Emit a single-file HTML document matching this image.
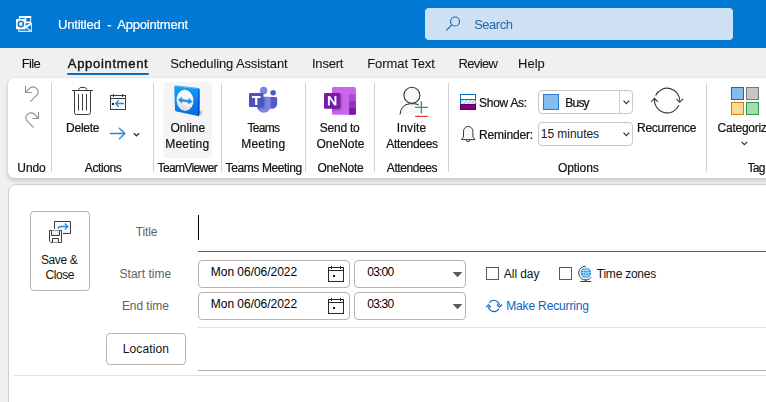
<!DOCTYPE html>
<html lang="en">
<head>
<meta charset="utf-8">
<title>Untitled - Appointment</title>
<style>
*{box-sizing:border-box;margin:0;padding:0}
html,body{width:766px;height:402px;overflow:hidden;background:#f0f0f0}
body{position:relative;font-family:"Liberation Sans",sans-serif;font-size:12px;color:#242424;line-height:16px}
.abs,.t{position:absolute;white-space:nowrap}
#titlebar{position:absolute;left:0;top:0;width:766px;height:48px;background:#0078d4}
#search{position:absolute;left:425px;top:8px;width:308px;height:32px;background:#cde1f3;border-radius:4px}
#ribbon{position:absolute;left:8px;top:78px;width:780px;height:100px;background:#fff;border-radius:6px;box-shadow:0 0 1px rgba(0,0,0,.20),0 2px 4px rgba(0,0,0,.13),0 4px 6px rgba(0,0,0,.05)}
.sep{position:absolute;top:83px;width:1px;height:89px;background:#d2d2d2}
#gs .t{-webkit-text-stroke:0.22px currentColor}
#content{position:absolute;left:8px;top:184px;width:780px;height:240px;background:#fff;border:1px solid #cdcdcd;border-radius:8px 0 0 0}
.box{position:absolute;border:1px solid #b6b3b0;border-radius:4px;background:#fff}
.chk{position:absolute;width:13px;height:13px;border:1px solid #5a5a5a;background:#fff}
#ico{position:absolute;left:0;top:0;width:766px;height:402px;overflow:hidden}
</style>
</head>
<body>
<div id="titlebar"></div>
<div id="search"></div>
<div class="abs" style="left:67px;top:73px;width:82px;height:2px;background:#0f6cbd;border-radius:1px"></div>

<div id="ribbon"></div>
<div class="sep" style="left:51px"></div>
<div class="sep" style="left:153px"></div>
<div class="sep" style="left:221px"></div>
<div class="sep" style="left:305px"></div>
<div class="sep" style="left:374px"></div>
<div class="sep" style="left:448px"></div>
<div class="sep" style="left:706px"></div>
<div class="abs" style="left:163px;top:82px;width:49px;height:76px;background:#f5f5f5;border-radius:4px"></div>

<div class="box" style="left:538px;top:90px;width:95px;height:24px;border-color:#c8c8c8"></div>
<div class="abs" style="left:619px;top:91px;width:1px;height:22px;background:#d0d0d0"></div>
<div class="abs" style="left:543px;top:94px;width:16px;height:16px;background:#83bcee;border:1px solid #2a7bd0"></div>
<div class="box" style="left:538px;top:122px;width:95px;height:24px;border-color:#c8c8c8"></div>

<div id="content"></div>
<div class="box" style="left:30px;top:211px;width:60px;height:80px"></div>
<div class="abs" style="left:198px;top:215px;width:1px;height:25px;background:#000"></div>
<div class="abs" style="left:198px;top:251px;width:570px;height:1px;background:#0078d4"></div>
<div class="box" style="left:198px;top:260px;width:152px;height:28px"></div>
<div class="box" style="left:354px;top:260px;width:112px;height:28px"></div>
<div class="box" style="left:198px;top:292px;width:152px;height:28px"></div>
<div class="box" style="left:354px;top:292px;width:112px;height:28px"></div>
<div class="chk" style="left:486px;top:267px"></div>
<div class="chk" style="left:559px;top:267px"></div>
<div class="abs" style="left:198px;top:327px;width:570px;height:1px;background:#e1e1e1"></div>
<div class="box" style="left:106px;top:333px;width:80px;height:32px"></div>
<div class="abs" style="left:198px;top:370px;width:570px;height:1px;background:#b0aeab"></div>
<div class="abs" style="left:14px;top:375px;width:760px;height:1px;background:#e1e1e1"></div>

<div class="t" id="b15" style="left:540.85px;top:126px;font-size:12px;letter-spacing:-0.052px;color:#1a1a1a;">15 minutes</div>
<div class="t" id="fSave" style="left:40.92px;top:252px;font-size:12px;letter-spacing:-0.376px;color:#141414;">Save &amp;</div>
<div class="t" id="fClose" style="left:45.61px;top:267px;font-size:12px;letter-spacing:-0.452px;color:#141414;">Close</div>
<div class="t" id="fTitle" style="left:135.80px;top:224px;font-size:12px;letter-spacing:-0.152px;color:#616161;">Title</div>
<div class="t" id="fStart" style="left:119.48px;top:266px;font-size:12px;letter-spacing:0.044px;color:#616161;">Start time</div>
<div class="t" id="fEnd" style="left:121.88px;top:298px;font-size:12px;letter-spacing:-0.049px;color:#616161;">End time</div>
<div class="t" id="fD1" style="left:210.80px;top:264px;font-size:12px;letter-spacing:-0.029px;color:#000;">Mon 06/06/2022</div>
<div class="t" id="fD2" style="left:210.80px;top:296px;font-size:12px;letter-spacing:-0.029px;color:#000;">Mon 06/06/2022</div>
<div class="t" id="fT1" style="left:367.29px;top:264px;font-size:12px;letter-spacing:-0.784px;color:#000;">03:00</div>
<div class="t" id="fT2" style="left:367.29px;top:296px;font-size:12px;letter-spacing:-0.784px;color:#000;">03:30</div>
<div class="t" id="fAll" style="left:503.86px;top:266px;font-size:12px;letter-spacing:-0.071px;color:#141414;">All day</div>
<div class="t" id="fTz" style="left:596.80px;top:266px;font-size:12px;letter-spacing:-0.239px;color:#141414;">Time zones</div>
<div class="t" id="fMk" style="left:506.14px;top:298px;font-size:12px;letter-spacing:-0.138px;color:#0f5fbc;">Make Recurring</div>
<div class="t" id="fLoc" style="left:122.80px;top:341px;font-size:12px;letter-spacing:0.114px;color:#141414;">Location</div>

<svg id="ico" width="766" height="402" viewBox="0 0 766 402">
<!-- outlook logo -->
<g>
 <rect x="18.900" y="16" width="12.300" height="8" fill="#fff"/>
 <rect x="20.200" y="18" width="4.600" height="1" fill="#0078d4"/>
 <rect x="26.300" y="18" width="4" height="3.500" fill="#0078d4"/>
 <rect x="18.300" y="23" width="13.500" height="8.800" fill="#fff"/>
 <path d="M25.5 23.300 H30.200 L25.5 25.800z" fill="#0078d4"/>
 <path d="M31 25 V30.200 L26.900 27.400z" fill="#0078d4"/>
 <path d="M19.300 29.300 H25.200 L25.800 28 L30 30.700 H19.300z" fill="#0078d4"/>
 <rect x="16" y="19.100" width="9.100" height="10" fill="#fff"/>
 <ellipse cx="20.800" cy="24" rx="2.500" ry="2.800" fill="none" stroke="#0078d4" stroke-width="1.600"/>
</g>
<!-- search -->
<g fill="none" stroke="#2468b0" stroke-width="1.200" stroke-linecap="round">
 <circle cx="455" cy="21.5" r="4.5"/>
 <path d="M451.8 24.8 L446.7 30.2"/>
</g>
<!-- undo / redo -->
<g fill="none" stroke="#8f8f8f" stroke-width="1.1">
 <path d="M25.5 86 V92.5 H31.8"/>
 <path d="M25.8 92.2 L30 88 A5 5 0 0 1 37 95 L30.3 101.7"/>
 <path d="M38.5 112 V118.5 H32.2"/>
 <path d="M38.2 118.2 L34 114 A5 5 0 0 0 27 121 L33.7 127.7"/>
</g>
<!-- delete -->
<g fill="none" stroke="#3b3b3b" stroke-width="1">
 <path d="M72 90.5 H93"/>
 <path d="M78.5 90.5 C78.8 88.5 79.8 87.5 81 87.5 H84.5 C85.7 87.5 86.7 88.5 87 90.5"/>
 <path d="M74.5 90.5 V112.5 A2 2 0 0 0 76.5 114.5 H88.5 A2 2 0 0 0 90.5 112.5 V90.5"/>
 <path d="M78.5 94 V110.5 M82.5 94 V110.5 M86.5 94 V110.5"/>
</g>
<!-- calendar w/ arrow -->
<g fill="none" stroke="#3b3b3b" stroke-width="1">
 <rect x="110.5" y="95.5" width="15" height="14" fill="#fafafa"/>
 <path d="M110.5 98.5 H125.5" />
 <path d="M113.5 94 V97 M122.5 94 V97"/>
 <rect x="112" y="103" width="2" height="2" fill="#222" stroke="none"/>
 <path d="M124 103.5 H115.6 M118.8 100.3 L115.6 103.5 L118.8 106.7" stroke="#2b88d8" stroke-width="1.3"/>
</g>
<!-- forward arrow -->
<g fill="none" stroke="#2b88d8" stroke-width="1.4" stroke-linecap="round" stroke-linejoin="round">
 <path d="M110.3 133.5 H124.6 M119.4 128.2 L124.8 133.5 L119.4 138.8"/>
</g>
<path d="M133.8 133.2 L136.5 135.8 L139.2 133.2" fill="none" stroke="#333" stroke-width="1.2"/>
<!-- teamviewer -->
<defs>
 <linearGradient id="tv1" x1="0" y1="0" x2="0.250" y2="1"><stop offset="0" stop-color="#1ea4f6"/><stop offset="0.5" stop-color="#0d8bef"/><stop offset="1" stop-color="#0a6ee2"/></linearGradient>
 <linearGradient id="tv2" x1="0.600" y1="0" x2="0.300" y2="1"><stop offset="0" stop-color="#ffffff"/><stop offset="0.550" stop-color="#f4f5f7"/><stop offset="1" stop-color="#d3d7dd"/></linearGradient>
 <linearGradient id="tv3" x1="0" y1="0" x2="0" y2="1"><stop offset="0" stop-color="#0a6ae6"/><stop offset="1" stop-color="#0638b4"/></linearGradient>
 <linearGradient id="tv4" x1="0" y1="0" x2="0" y2="1"><stop offset="0" stop-color="#3aa6f5"/><stop offset="1" stop-color="#1479e6"/></linearGradient>
 <filter id="bl" x="-50%" y="-50%" width="200%" height="200%"><feGaussianBlur stdDeviation="0.800"/></filter>
</defs>
<path d="M197 112 L201.500 110.500 L201.800 113.200 L198 116z" fill="#000" opacity="0.350" filter="url(#bl)"/>
<path d="M176 85.600 Q174.100 85.500 174.200 87.300 L175 109.900 Q175.100 111.300 176.600 111.600 L196.800 115.800 Q199.300 116.300 199.400 114 L199.600 90.200 Q199.600 88.300 197.700 88.100 Z" fill="url(#tv1)"/>
<path d="M198.100 88.200 Q199.600 88.400 199.600 90.200 L199.400 114 Q199.300 116 198 116z" fill="url(#tv3)"/>
<path d="M175.300 86.100 L197.500 88.600" stroke="#6fd0ff" stroke-width="0.700" fill="none" opacity="0.800"/>
<ellipse cx="185" cy="100.300" rx="8.400" ry="10.600" fill="url(#tv2)" transform="rotate(-4 185 100.300)"/>
<path d="M177.800 99.500 L182.400 96.800 L182.200 98.900 L188.400 99.900 L188.600 97.800 L192.700 101.800 L188.100 104.300 L188.300 102.400 L182.100 101.400 L181.900 103.500z" fill="url(#tv4)"/>
<!-- teams -->
<circle cx="263.700" cy="90.500" r="3.700" fill="#7b83eb"/>
<circle cx="273.100" cy="92.800" r="2.750" fill="#5059c9"/>
<path d="M270 96.900 H275.800 Q277.200 96.900 277.200 98.300 V103.500 A5 5 0 0 1 270 108.200z" fill="#5059c9"/>
<path d="M257 96.800 H269.300 Q270.600 96.800 270.600 98.100 V106 A6.800 6.800 0 0 1 257 106z" fill="#7b83eb"/>
<clipPath id="tmc"><path d="M257 96.800 H269.300 Q270.600 96.800 270.600 98.100 V106 A6.800 6.800 0 0 1 257 106z M260 86.800 h8v7.500h-8z"/></clipPath>
<rect x="250" y="94" width="14.400" height="14" rx="1.300" fill="#000" opacity="0.350" filter="url(#bl)" clip-path="url(#tmc)"/>
<rect x="249" y="93" width="14.400" height="14" rx="1.300" fill="#4b53bc"/>
<path d="M251.900 95.900 H260.600 V98 H257.400 V105 H255.100 V98 H251.900z" fill="#fff"/>
<!-- onenote -->
<rect x="332" y="87.100" width="23.900" height="27.600" rx="1.500" fill="#ca64ea"/>
<rect x="349.100" y="94.100" width="6.800" height="6.900" fill="#ae4bd5"/>
<rect x="349.100" y="101" width="6.800" height="7" fill="#9332bf"/>
<path d="M349.100 108 H355.900 V113.200 Q355.900 114.700 354.400 114.700 H349.100z" fill="#7719aa"/>
<clipPath id="onc"><rect x="332" y="87.100" width="23.900" height="27.600" rx="1.500"/></clipPath>
<rect x="325" y="94.100" width="16.200" height="15.600" rx="1.300" fill="#000" opacity="0.350" filter="url(#bl)" clip-path="url(#onc)"/>
<rect x="324" y="93.100" width="16.200" height="15.600" rx="1.300" fill="#7719aa"/>
<path d="M327.900 105.600 V95.900 H330 L334.500 102.600 V95.900 H336.400 V105.600 H334.400 L329.800 98.700 V105.600z" fill="#fff"/>
<!-- invite attendees -->
<g fill="#f8f8f8" stroke="#333" stroke-width="1.100">
 <path d="M400 114.5 C400.5 108 404.5 104 410 103.8 H414 Q416.8 103.9 418.6 105 V114.5z" stroke="none"/>
 <path d="M400 114.5 C400.5 108 404.5 104 410 103.8 H414 Q416.8 103.9 418.6 105" fill="none"/>
 <circle cx="411.9" cy="95.2" r="8"/>
</g>
<path d="M415.1 107.4 H427.9 M421.4 101.2 V113.6" stroke="#2f9e4a" stroke-width="1.4" fill="none"/>
<path d="M415.1 116.4 H427.9" stroke="#e8423f" stroke-width="1.3" fill="none"/>
<!-- show as -->
<rect x="460.5" y="94.5" width="15" height="15" fill="#fff" stroke="#0f6cbd"/>
<rect x="461" y="100" width="14" height="4" fill="#b9daf6"/>
<path d="M460 99.5 H476" stroke="#0f6cbd" fill="none"/>
<path d="M462 104 l3-4 M466 104 l3-4 M470 104 l3-4 M474 104 l2-3" stroke="#fff" stroke-width="1" fill="none"/>
<rect x="460" y="104" width="16" height="6" fill="#800080"/>
<rect x="460.5" y="104.500" width="15" height="5" fill="none" stroke="#5c005c"/>
<!-- bell -->
<path d="M463.5 137 V131.3 A4.7 4.9 0 0 1 472.9 131.300 V137 L474.800 139 V139.600 H461.600 V139 z" fill="#f8f8f8" stroke="#3a3a3a" stroke-width="1" stroke-linejoin="round"/>
<path d="M466.500 140 A1.700 1.700 0 0 0 469.900 140" fill="none" stroke="#3a3a3a" stroke-width="1"/>
<!-- dropdown chevrons -->
<path d="M623.5 100.700 L626.3 103.600 L629.200 100.700" fill="none" stroke="#333" stroke-width="1.200"/>
<path d="M623.5 132.700 L626.3 135.600 L629.200 132.700" fill="none" stroke="#333" stroke-width="1.200"/>
<!-- recurrence -->
<g fill="none" stroke="#3a3a3a" stroke-width="1.1">
 <path d="M655.6 95.600 A12.700 12.700 0 0 1 679.800 102"/>
 <path d="M676.3 98.800 L679.700 102.300 L683.1 98.800"/>
 <path d="M678.9 105.300 A12.800 12.800 0 0 1 654.500 98.600"/>
 <path d="M651.1 101.900 L654.500 98.400 L657.900 101.900"/>
</g>
<!-- categorize -->
<rect x="731.5" y="87.500" width="12" height="12" fill="#83bcee" stroke="#0f6cbd"/>
<rect x="746.5" y="87.500" width="12" height="12" fill="#c8c6c4" stroke="#797775"/>
<rect x="731.5" y="102.500" width="12" height="12" fill="#f8dc8f" stroke="#e17a0e"/>
<rect x="746.5" y="102.500" width="12" height="12" fill="#a4dda8" stroke="#2e9b4a"/>
<path d="M741.6 141.800 L744.400 144.600 L747.200 141.800" fill="none" stroke="#333" stroke-width="1.200"/>
<!-- save & close -->
<g fill="none" stroke="#3b3b3b" stroke-width="1">
 <path d="M54.5 229 V221.500 H70.500 V233.500 H63" fill="#f8f8f8" stroke="none"/>
 <path d="M54.5 229 V221.500 H70.500 V233.500 H63"/>
 <path d="M58 228.500 Q58.500 226.500 61 226.500 H67.500 M64.800 223.500 L67.800 226.500 L64.800 229.500" stroke="#2b88d8" stroke-width="1.300"/>
 <path d="M49.500 230.500 H61.500 V242.500 H51 L49.500 241z" fill="#fff"/>
 <path d="M51.500 230.500 V235.500 H59.500 V230.500" fill="#f4f4f4"/>
 <path d="M52.500 242.500 V238.500 H58.500 V242.500" fill="#f4f4f4"/>
</g>
<!-- calendar icons -->
<g fill="none" stroke="#2a2a2a" stroke-width="1">
 <rect x="328.500" y="267.5" width="15" height="14" fill="#fafafa"/>
 <path d="M328.500 270.5 H343.500"/>
 <path d="M331.500 266 V269 M340.500 266 V269"/>
 <rect x="333" y="275" width="2" height="2" fill="#111" stroke="none"/>
</g>
<g fill="none" stroke="#2a2a2a" stroke-width="1">
 <rect x="328.500" y="299.5" width="15" height="14" fill="#fafafa"/>
 <path d="M328.500 302.5 H343.500"/>
 <path d="M331.500 298 V301 M340.500 298 V301"/>
 <rect x="333" y="307" width="2" height="2" fill="#111" stroke="none"/>
</g>
<!-- time arrows -->
<path d="M452.700 272 H462.300 L457.500 277.200z" fill="#5a5a5a"/>
<path d="M452.700 304 H462.300 L457.500 309.200z" fill="#5a5a5a"/>
<!-- globe -->
<circle cx="585.900" cy="272.700" r="5.200" fill="#1e8fdd"/>
<g fill="none" stroke="#d4ebfc" stroke-width="0.750">
 <ellipse cx="585.900" cy="272.700" rx="2.300" ry="5"/>
 <path d="M581 272.700 H590.800 M581.900 270.200 H589.900 M581.900 275.200 H589.900 M585.900 267.700 V277.700"/>
</g>
<path d="M585.700 266.200 A6.900 6.900 0 1 0 591.200 277.200" fill="none" stroke="#3a3a3a" stroke-width="1"/>
<path d="M580.200 281.500 H591.200 M585.700 279.300 V281.500" fill="none" stroke="#3a3a3a" stroke-width="1"/>
<!-- make recurring icon -->
<g fill="none" stroke="#1a6cc4" stroke-width="1.250">
 <path d="M489 303 A5.600 5.600 0 0 1 499.300 305.300"/>
 <path d="M497 304.500 L499.600 307 L502 304.500" />
 <path d="M498.900 308.800 A5.600 5.600 0 0 1 488.500 306.500"/>
 <path d="M486.200 307.300 L488.400 304.800 L491 307.300"/>
</g>

</svg>
<div id="gs" style="position:absolute;left:0;top:0;width:766px;height:402px;will-change:transform">
<div class="t" id="ttl" style="left:58.11px;top:17px;font-size:13px;letter-spacing:-0.225px;color:#ffffff;">Untitled  -  Appointment</div>
<div class="t" id="srch" style="left:474.17px;top:17px;font-size:13px;letter-spacing:-0.480px;color:#2468b0;-webkit-text-stroke:0;">Search</div>
<div class="t" id="tFile" style="left:21.81px;top:56px;font-size:13px;letter-spacing:-0.707px;color:#141414;-webkit-text-stroke:0.08px currentColor;">File</div>
<div class="t" id="tAppt" style="left:67.78px;top:56px;font-size:13px;letter-spacing:0.691px;color:#141414;-webkit-text-stroke:0.4px #141414;">Appointment</div>
<div class="t" id="tSched" style="left:170.19px;top:56px;font-size:13px;letter-spacing:-0.135px;color:#141414;-webkit-text-stroke:0.08px currentColor;">Scheduling Assistant</div>
<div class="t" id="tIns" style="left:311.93px;top:56px;font-size:13px;letter-spacing:-0.194px;color:#141414;-webkit-text-stroke:0.08px currentColor;">Insert</div>
<div class="t" id="tFmt" style="left:367.25px;top:56px;font-size:13px;letter-spacing:-0.073px;color:#141414;-webkit-text-stroke:0.08px currentColor;">Format Text</div>
<div class="t" id="tRev" style="left:458.39px;top:56px;font-size:13px;letter-spacing:-0.611px;color:#141414;-webkit-text-stroke:0.08px currentColor;">Review</div>
<div class="t" id="tHelp" style="left:518.06px;top:56px;font-size:13px;color:#141414;-webkit-text-stroke:0.08px currentColor;">Help</div>
<div class="t" id="gUndo" style="left:17.36px;top:160px;font-size:12px;letter-spacing:-0.091px;color:#141414;">Undo</div>
<div class="t" id="gAct" style="left:84.84px;top:160px;font-size:12px;letter-spacing:-0.409px;color:#141414;">Actions</div>
<div class="t" id="gTV" style="left:157.55px;top:160px;font-size:12px;letter-spacing:-0.631px;color:#141414;">TeamViewer</div>
<div class="t" id="gTM" style="left:225.58px;top:160px;font-size:12px;letter-spacing:-0.390px;color:#141414;">Teams Meeting</div>
<div class="t" id="gON" style="left:317.50px;top:160px;font-size:12px;letter-spacing:-0.321px;color:#141414;">OneNote</div>
<div class="t" id="gAtt" style="left:386.84px;top:160px;font-size:12px;letter-spacing:-0.423px;color:#141414;">Attendees</div>
<div class="t" id="gOpt" style="left:558.02px;top:160px;font-size:12px;letter-spacing:-0.107px;color:#141414;">Options</div>
<div class="t" id="gTag" style="left:747.55px;top:160px;font-size:12px;letter-spacing:-0.776px;color:#141414;width:17.800px;overflow:hidden;">Tags</div>
<div class="t" id="bDel" style="left:66.09px;top:120px;font-size:12px;letter-spacing:-0.264px;color:#141414;">Delete</div>
<div class="t" id="bOnl" style="left:170.50px;top:120px;font-size:12px;color:#141414;">Online</div>
<div class="t" id="bOnl2" style="left:165.28px;top:136px;font-size:12px;letter-spacing:0.191px;color:#141414;">Meeting</div>
<div class="t" id="bTms" style="left:247.58px;top:120px;font-size:12px;letter-spacing:-0.756px;color:#141414;">Teams</div>
<div class="t" id="bTms2" style="left:241.28px;top:136px;font-size:12px;letter-spacing:0.192px;color:#141414;">Meeting</div>
<div class="t" id="bSnd" style="left:319.70px;top:120px;font-size:12px;letter-spacing:-0.221px;color:#141414;">Send to</div>
<div class="t" id="bSnd2" style="left:316.50px;top:136px;font-size:12px;color:#141414;">OneNote</div>
<div class="t" id="bInv" style="left:396.75px;top:120px;font-size:12px;letter-spacing:0.134px;color:#141414;">Invite</div>
<div class="t" id="bInv2" style="left:386.29px;top:136px;font-size:12px;letter-spacing:-0.276px;color:#141414;">Attendees</div>
<div class="t" id="bShow" style="left:479.01px;top:95px;font-size:12px;letter-spacing:-0.262px;color:#141414;">Show As:</div>
<div class="t" id="bRem" style="left:479.08px;top:127px;font-size:12px;letter-spacing:-0.165px;color:#141414;">Reminder:</div>
<div class="t" id="bBusy" style="left:565.28px;top:95px;font-size:12px;letter-spacing:-0.781px;color:#141414;">Busy</div>
<div class="t" id="bRec" style="left:637.09px;top:120px;font-size:12px;letter-spacing:-0.301px;color:#141414;">Recurrence</div>
<div class="t" id="bCat" style="left:717.60px;top:120px;font-size:12px;letter-spacing:-0.266px;color:#141414;">Categorize</div>
</div>

</body>
</html>
